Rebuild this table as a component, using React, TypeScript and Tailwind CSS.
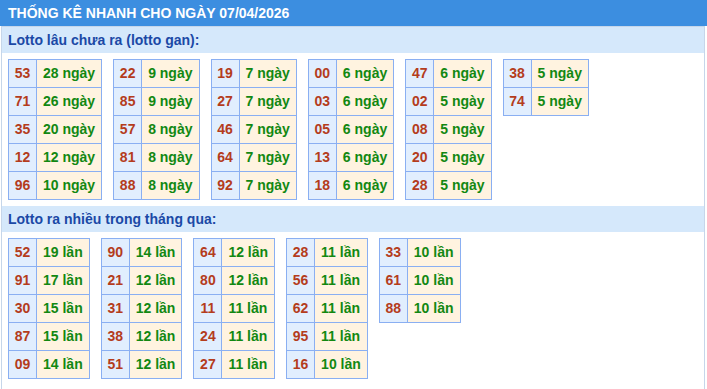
import React from "react";

type Row = [string, string];

const gan: Row[][] = [
  [["53", "28 ngày"], ["71", "26 ngày"], ["35", "20 ngày"], ["12", "12 ngày"], ["96", "10 ngày"]],
  [["22", "9 ngày"], ["85", "9 ngày"], ["57", "8 ngày"], ["81", "8 ngày"], ["88", "8 ngày"]],
  [["19", "7 ngày"], ["27", "7 ngày"], ["46", "7 ngày"], ["64", "7 ngày"], ["92", "7 ngày"]],
  [["00", "6 ngày"], ["03", "6 ngày"], ["05", "6 ngày"], ["13", "6 ngày"], ["18", "6 ngày"]],
  [["47", "6 ngày"], ["02", "5 ngày"], ["08", "5 ngày"], ["20", "5 ngày"], ["28", "5 ngày"]],
  [["38", "5 ngày"], ["74", "5 ngày"]],
];

const nhieu: Row[][] = [
  [["52", "19 lần"], ["91", "17 lần"], ["30", "15 lần"], ["87", "15 lần"], ["09", "14 lần"]],
  [["90", "14 lần"], ["21", "12 lần"], ["31", "12 lần"], ["38", "12 lần"], ["51", "12 lần"]],
  [["64", "12 lần"], ["80", "12 lần"], ["11", "11 lần"], ["24", "11 lần"], ["27", "11 lần"]],
  [["28", "11 lần"], ["56", "11 lần"], ["62", "11 lần"], ["95", "11 lần"], ["16", "10 lần"]],
  [["33", "10 lần"], ["61", "10 lần"], ["88", "10 lần"]],
];

function Table({ rows }: { rows: Row[] }) {
  return (
    <div className="grid grid-cols-[28px_auto] self-start border-l border-t border-[#8aaff2]">
      {rows.map(([n, v], i) => (
        <React.Fragment key={i}>
          <div className="flex h-[28px] items-center justify-center border-b border-r border-[#8aaff2] bg-[#e1eefe] text-[#b43c1c]">
            {n}
          </div>
          <div className="flex h-[28px] items-center whitespace-nowrap border-b border-r border-[#8aaff2] bg-[#fff3e0] px-[6px] text-[#128812]">
            {v}
          </div>
        </React.Fragment>
      ))}
    </div>
  );
}

function SubHeader({ children }: { children: React.ReactNode }) {
  return (
    <div className="h-[26px] bg-[#d5e8fb] px-[6px] text-[14px] font-bold leading-[26px] text-[#1b49a6]">
      {children}
    </div>
  );
}

export default function App() {
  return (
    <div
      className="h-[389px] w-[707px] overflow-hidden bg-white text-[14px] font-bold"
      style={{ fontFamily: '"Liberation Sans", Arial, sans-serif' }}
    >
      <div className="h-[26px] bg-[#3c8ee0] px-[8px] text-[14px] font-bold leading-[26px] text-white">
        THỐNG KÊ NHANH CHO NGÀY 07/04/2026
      </div>
      <div className="ml-px h-[363px] w-[704px] border-x border-t border-[#c6d6ea]">
        <SubHeader>Lotto lâu chưa ra (lotto gan):</SubHeader>
        <div className="flex gap-[11px] px-[6px] py-[6px]">
          {gan.map((t, i) => (
            <Table key={i} rows={t} />
          ))}
        </div>
        <SubHeader>Lotto ra nhiều trong tháng qua:</SubHeader>
        <div className="flex gap-[11px] px-[6px] py-[6px]">
          {nhieu.map((t, i) => (
            <Table key={i} rows={t} />
          ))}
        </div>
      </div>
    </div>
  );
}
